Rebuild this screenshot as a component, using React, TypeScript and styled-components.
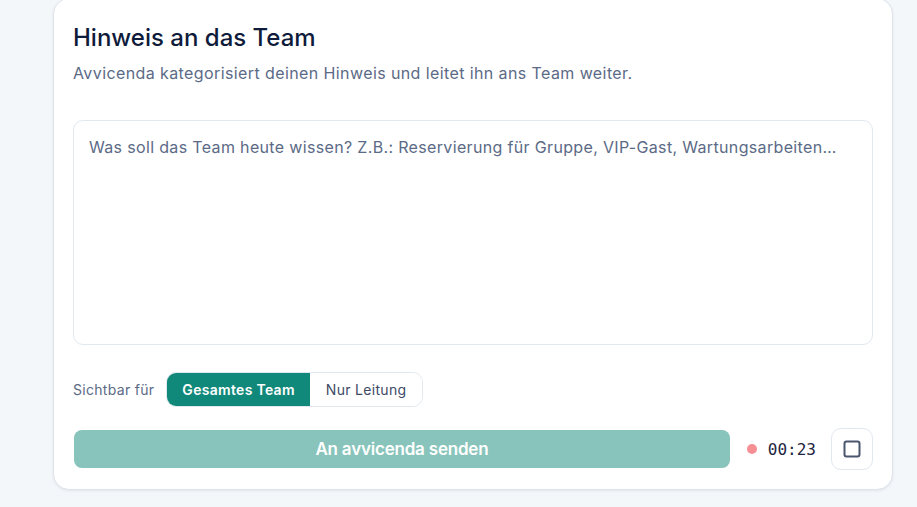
import React from "react";
import styled, { createGlobalStyle } from "styled-components";

const Global = createGlobalStyle`
  html, body { margin: 0; padding: 0; background: #f4f7fa; }
  body { font-family: Inter, "Noto Sans", sans-serif; overflow: hidden; }
  * { box-sizing: border-box; }
`;

const Page = styled.div`
  padding-left: 53px;
  width: 917px;
  height: 507px;
`;

const Card = styled.section`
  width: 840px;
  margin-top: -2px;
  background: #ffffff;
  border: 1px solid #dfe3ea;
  border-radius: 16px;
  box-shadow: 0 1px 3px rgba(15, 27, 58, 0.08);
  padding: 23px 19px 19px 19px;
  display: flex;
  flex-direction: column;
`;

const Title = styled.h2`
  margin: 0;
  font-size: 24px;
  line-height: 32px;
  font-weight: 500;
  color: #0f1b3a;
  letter-spacing: 0;
`;

const Subtitle = styled.p`
  margin: 7px 0 0;
  font-size: 16px;
  line-height: 24px;
  color: #5b6a86;
  letter-spacing: 0.4px;
`;

const Note = styled.textarea`
  margin-top: 35px;
  height: 225px;
  width: 100%;
  resize: none;
  border: 1px solid #e2e8f0;
  border-radius: 10px;
  padding: 14px 15px;
  font-family: inherit;
  font-size: 16px;
  line-height: 24px;
  letter-spacing: 0.34px;
  color: #0f1b3a;
  outline: none;
  &::placeholder { color: #5b6a86; opacity: 1; }
`;

const VisibilityRow = styled.div`
  margin-top: 27px;
  display: flex;
  align-items: center;
  gap: 12px;
`;

const Label = styled.span`
  font-size: 14px;
  letter-spacing: 0.3px;
  color: #5b6a86;
`;

const Segmented = styled.div`
  display: flex;
  height: 35px;
  border: 1px solid #e2e8f0;
  border-radius: 10px;
  overflow: hidden;
`;

const Segment = styled.button<{ $active?: boolean }>`
  border: 0;
  margin: 0;
  padding: 0 ${(p) => (p.$active ? "15px" : "16px")};
  font-family: inherit;
  font-size: 14px;
  letter-spacing: 0.3px;
  font-weight: ${(p) => (p.$active ? 600 : 400)};
  background: ${(p) => (p.$active ? "#11897a" : "#ffffff")};
  color: ${(p) => (p.$active ? "#ffffff" : "#3d4a66")};
  cursor: pointer;
`;

const ActionRow = styled.div`
  margin-top: 21px;
  display: flex;
  align-items: center;
`;

const SendButton = styled.button`
  flex: 1;
  height: 38px;
  margin-left: 1px;
  border: 0;
  border-radius: 8px;
  background: #88c4bb;
  color: #ffffff;
  font-family: inherit;
  font-size: 17px;
  font-weight: 600;
  letter-spacing: -0.2px;
`;

const Timer = styled.div`
  display: flex;
  align-items: center;
  gap: 11px;
  margin-left: 17px;
  margin-right: 15px;
`;

const Dot = styled.span`
  width: 10px;
  height: 10px;
  border-radius: 50%;
  background: #f58f93;
`;

const Time = styled.span`
  font-family: "DejaVu Sans Mono", "Liberation Mono", monospace;
  font-size: 16px;
  color: #1c2440;
`;

const StopButton = styled.button`
  width: 42px;
  height: 42px;
  border: 1px solid #e2e8f0;
  border-radius: 10px;
  background: #ffffff;
  display: flex;
  align-items: center;
  justify-content: center;
  padding: 0;
`;

export default function App() {
  return (
    <Page>
      <Global />
      <Card>
        <Title>Hinweis an das Team</Title>
        <Subtitle>Avvicenda kategorisiert deinen Hinweis und leitet ihn ans Team weiter.</Subtitle>
        <Note placeholder="Was soll das Team heute wissen? Z.B.: Reservierung für Gruppe, VIP-Gast, Wartungsarbeiten…" />
        <VisibilityRow>
          <Label>Sichtbar für</Label>
          <Segmented>
            <Segment $active>Gesamtes Team</Segment>
            <Segment>Nur Leitung</Segment>
          </Segmented>
        </VisibilityRow>
        <ActionRow>
          <SendButton>An avvicenda senden</SendButton>
          <Timer>
            <Dot />
            <Time>00:23</Time>
          </Timer>
          <StopButton aria-label="Stop">
            <svg width="18" height="18" viewBox="0 0 18 18" fill="none">
              <rect x="1.5" y="1.5" width="15" height="15" rx="2" stroke="#4a556e" strokeWidth="2" />
            </svg>
          </StopButton>
        </ActionRow>
      </Card>
    </Page>
  );
}
